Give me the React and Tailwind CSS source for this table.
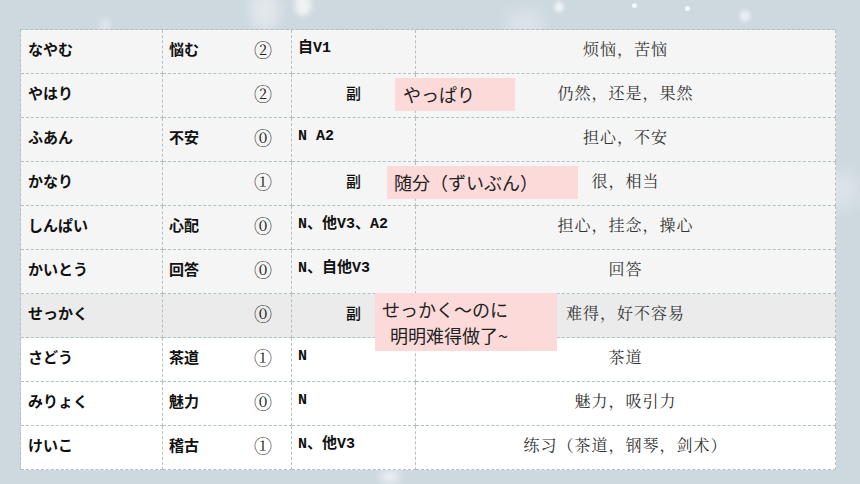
import React from 'react';

const rows = [
  { kana: 'なやむ', kanji: '悩む', tone: '②', pos: '自V1', mean: '烦恼，苦恼', bg: 'bg-[#f5f5f5]' },
  { kana: 'やはり', kanji: '', tone: '②', pos: '副', center: true, mean: '仍然，还是，果然', bg: 'bg-[#f5f5f5]' },
  { kana: 'ふあん', kanji: '不安', tone: '⓪', pos: 'N A2', mean: '担心，不安', bg: 'bg-[#f5f5f5]' },
  { kana: 'かなり', kanji: '', tone: '①', pos: '副', center: true, mean: '很，相当', bg: 'bg-[#f5f5f5]' },
  { kana: 'しんぱい', kanji: '心配', tone: '⓪', pos: 'N、他V3、A2', mean: '担心，挂念，操心', bg: 'bg-[#f5f5f5]' },
  { kana: 'かいとう', kanji: '回答', tone: '⓪', pos: 'N、自他V3', mean: '回答', bg: 'bg-[#f5f5f5]' },
  { kana: 'せっかく', kanji: '', tone: '⓪', pos: '副', center: true, mean: '难得，好不容易', bg: 'bg-[#ebebeb]' },
  { kana: 'さどう', kanji: '茶道', tone: '①', pos: 'N', mean: '茶道', bg: 'bg-white' },
  { kana: 'みりょく', kanji: '魅力', tone: '⓪', pos: 'N', mean: '魅力，吸引力', bg: 'bg-white' },
  { kana: 'けいこ', kanji: '稽古', tone: '①', pos: 'N、他V3', mean: '练习（茶道，钢琴，剑术）', bg: 'bg-white' },
];

const jp = { fontFamily: '"Noto Sans CJK JP", sans-serif' };
const mono = { fontFamily: '"Liberation Mono", "Noto Sans CJK SC", monospace' };
const zh = { fontFamily: '"Noto Serif CJK SC", "Noto Sans CJK SC", serif' };

const cell = 'h-[44px] pb-[5px] border-r border-b border-dashed border-[#b0c2c2] flex items-center';

export default function App() {
  return (
    <div className="relative w-[860px] h-[484px] overflow-hidden bg-[#cdd8df]">
      {/* snow */}
      <div className="absolute inset-0 pointer-events-none">
        <div className="absolute left-[250px] top-[-10px] w-[30px] h-[40px] rounded-full bg-white/40 blur-[6px]" />
        <div className="absolute left-[295px] top-[-6px] w-[16px] h-[22px] rounded-full bg-white/70 blur-[3px]" />
        <div className="absolute left-[555px] top-[2px] w-[8px] h-[10px] rounded-full bg-white/80 blur-[2px]" />
        <div className="absolute left-[505px] top-[10px] w-[40px] h-[30px] rounded-full bg-white/30 blur-[8px]" />
        <div className="absolute left-[632px] top-[3px] w-[5px] h-[5px] rounded-full bg-white/80" />
        <div className="absolute left-[685px] top-[6px] w-[5px] h-[5px] rounded-full bg-white/80" />
        <div className="absolute left-[740px] top-[10px] w-[10px] h-[12px] rounded-full bg-white/60 blur-[2px]" />
        <div className="absolute left-[100px] top-[18px] w-[10px] h-[14px] rounded-full bg-white/40 blur-[3px]" />
        <div className="absolute left-[820px] top-[170px] w-[40px] h-[40px] rounded-full bg-white/30 blur-[8px]" />
        <div className="absolute left-[380px] top-[470px] w-[20px] h-[14px] rounded-full bg-white/60 blur-[4px]" />
      </div>

      <div className="relative ml-[20px] mt-[29px] w-[815px]">
        <div className="grid grid-cols-[142px_129px_124px_420px] border-t border-l border-dashed border-[#b0c2c2]">
          {rows.map((r, i) => (
            <React.Fragment key={i}>
              <div className={`${cell} ${r.bg} pl-[7px] text-[15px] font-bold text-[#111]`} style={jp}>{r.kana}</div>
              <div className={`${cell} ${r.bg} justify-between pl-[6px] pr-[19px]`}>
                <span className="text-[15px] font-bold text-[#111]" style={jp}>{r.kanji}</span>
                <span className="text-[18px] text-[#222]" style={zh}>{r.tone}</span>
              </div>
              <div
                className={`${cell} ${r.bg} ${r.center ? 'justify-center text-[15px] font-medium' : 'pl-[6px] text-[15px] font-bold'} text-[#111]`}
                style={r.center ? jp : mono}
              >
                {r.pos}
              </div>
              <div className={`${cell} ${r.bg} justify-center text-[16px] tracking-[1px] text-[#333]`} style={zh}>{r.mean}</div>
            </React.Fragment>
          ))}
        </div>

        {/* pink notes */}
        <div className="absolute left-[375px] top-[49px] w-[120px] h-[33px] bg-[#fcdada] flex items-center pl-[8px] text-[18px] text-[#222]" style={jp}>
          やっぱり
        </div>
        <div className="absolute left-[367px] top-[137px] w-[191px] h-[33px] bg-[#fcdada] flex items-center pl-[7px] text-[18px] text-[#222]" style={jp}>
          随分（ずいぶん）
        </div>
        <div className="absolute left-[355px] top-[264px] w-[182px] h-[58px] bg-[#fcdada] flex flex-col justify-center pl-[7px] text-[18px] leading-[26px] text-[#222]" style={jp}>
          <span>せっかく〜のに</span>
          <span className="pl-[8px]">明明难得做了~</span>
        </div>
      </div>
    </div>
  );
}
